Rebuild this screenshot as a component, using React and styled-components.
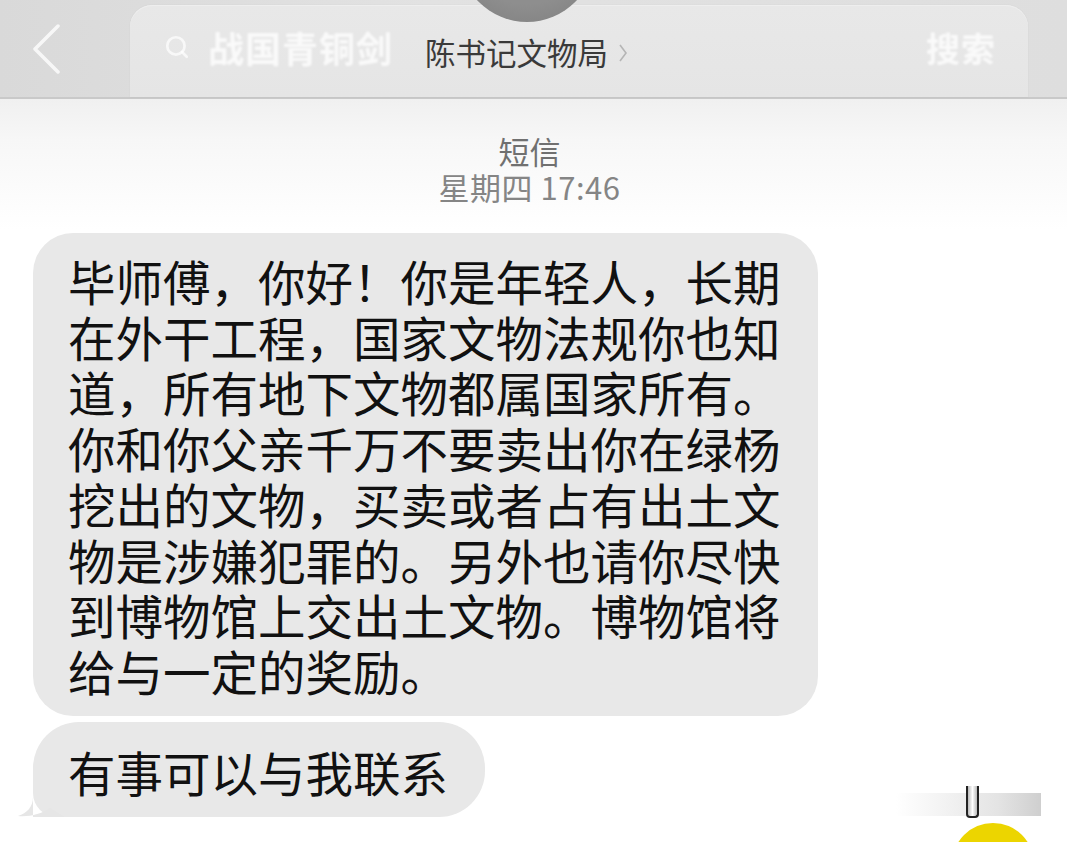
import styled, { createGlobalStyle } from "styled-components";
import { Search } from "lucide-react";

const GlobalStyle = createGlobalStyle`
  html, body {
    margin: 0;
    padding: 0;
    background: #ffffff;
  }
  body {
    font-family: "Noto Sans CJK SC", "Noto Sans", sans-serif;
    overflow: hidden;
  }
`;

const Screen = styled.div`
  position: relative;
  width: 1067px;
  height: 842px;
  overflow: hidden;
  background: linear-gradient(180deg, #f0f0f0 99px, #f7f7f7 140px, #ffffff 230px);
`;

const Header = styled.header`
  display: grid;
  grid-template-areas: "stack";
  height: 97px;
  background: linear-gradient(90deg, #d9d9d9 0%, #e2e2e2 40%, #dedede 100%);
  border-bottom: 2px solid #c9c9c9;
`;

const BarLayer = styled.div`
  grid-area: stack;
  display: flex;
  align-items: stretch;
`;

const BackButton = styled.div`
  width: 130px;
  display: flex;
  align-items: center;
  padding-left: 30px;
  box-sizing: border-box;
  filter: blur(0.4px);
`;

const GhostSearch = styled.div`
  width: 898px;
  margin-top: 5px;
  border-radius: 22px 22px 0 0;
  background: linear-gradient(180deg, #e8e8e8, #e5e5e5);
  box-shadow: inset 0 1px 0 #eeeeee, 0 0 2px rgba(0, 0, 0, 0.06);
  display: flex;
  align-items: center;
  padding: 0 32px 8px 34px;
  box-sizing: border-box;
  color: rgba(255, 255, 255, 0.78);
`;

const GhostText = styled.span`
  font-size: ${(p) => p.size}px;
  font-weight: 700;
  margin-left: ${(p) => p.gap || 0}px;
  letter-spacing: 1px;
  filter: blur(1.1px);
`;

const Spacer = styled.div`
  flex: 1;
`;

const TitleLayer = styled.div`
  grid-area: stack;
  position: relative;
  z-index: 1;
  display: flex;
  align-items: center;
  justify-content: center;
  padding: 8px 14px 0 0;
  gap: 10px;
`;

const Title = styled.span`
  font-size: 30.5px;
  color: #3a3a3a;
  line-height: 1;
`;

const Avatar = styled.div`
  position: absolute;
  left: 459px;
  top: -114px;
  width: 136px;
  height: 136px;
  border-radius: 50%;
  background: radial-gradient(circle at 50% 40%, #8e8e8e 60%, #7c7c7c 100%);
`;

const Stamp = styled.div`
  margin-top: 34px;
  display: flex;
  flex-direction: column;
  align-items: center;
  line-height: 36px;
  font-size: 31px;
  padding-right: 8px;
`;

const StampLine = styled.div`
  color: ${(p) => p.color};
  letter-spacing: ${(p) => p.spacing || 0}px;
`;

const Thread = styled.div`
  margin-top: 28px;
  padding-left: 33px;
  display: flex;
  flex-direction: column;
  align-items: flex-start;
  gap: 6px;
`;

const Bubble = styled.div`
  position: relative;
  background: #e8e8e8;
  border-radius: ${(p) => (p.tail ? "46px 46px 46px 24px" : "40px")};
  padding: ${(p) => (p.tail ? "22px 37px 18px 35px" : "20px 37px 17px 35px")};
  font-size: 47.5px;
  line-height: 55.7px;
  color: #111111;
  white-space: pre-line;
`;

const Tail = styled.svg`
  position: absolute;
  left: -16px;
  bottom: 0;
`;

const ScrollHint = styled.div`
  position: absolute;
  left: 896px;
  top: 793px;
  width: 145px;
  height: 23px;
  background: linear-gradient(90deg, rgba(255, 255, 255, 0) 0%, #f0f0f0 40%, #e4e4e4 70%, #cfcfcf 100%);
`;

const Handle = styled.div`
  position: absolute;
  left: 966px;
  top: 786px;
  width: 9px;
  height: 30px;
  border: 2px solid #222;
  border-top: none;
  border-radius: 0 0 4px 4px;
  background: linear-gradient(90deg, #bbb, #fff, #bbb);
`;

const FloatButton = styled.div`
  position: absolute;
  left: 952px;
  top: 823px;
  width: 82px;
  height: 82px;
  border-radius: 50%;
  background: #ecd500;
`;

const App = () => {
  return (
    <>
      <GlobalStyle />
      <Screen>
        <Header>
          <BarLayer>
            <BackButton>
              <svg width="32" height="52" viewBox="0 0 32 52">
                <path
                  d="M28 3 L5 26 L28 49"
                  fill="none"
                  stroke="#f7f7f7"
                  strokeWidth="3.5"
                  strokeLinecap="round"
                  strokeLinejoin="round"
                />
              </svg>
            </BackButton>
            <GhostSearch>
              <Search size={26} strokeWidth={2.5} color="rgba(255,255,255,0.7)" />
              <GhostText size={36} gap={18}>战国青铜剑</GhostText>
              <Spacer />
              <GhostText size={34}>搜索</GhostText>
            </GhostSearch>
          </BarLayer>
          <TitleLayer>
            <Title>陈书记文物局</Title>
            <svg width="10" height="20" viewBox="0 0 10 20">
              <path d="M2 2 L8 10 L2 18" fill="none" stroke="#b5b5b5" strokeWidth="1.6" />
            </svg>
          </TitleLayer>
        </Header>
        <Avatar />
        <Stamp>
          <StampLine color="#707070">短信</StampLine>
          <StampLine color="#858585" spacing={0.5}>星期四 17:46</StampLine>
        </Stamp>
        <Thread>
          <Bubble>
            {"毕师傅，你好！你是年轻人，长期\n在外干工程，国家文物法规你也知\n道，所有地下文物都属国家所有。\n你和你父亲千万不要卖出你在绿杨\n挖出的文物，买卖或者占有出土文\n物是涉嫌犯罪的。另外也请你尽快\n到博物馆上交出土文物。博物馆将\n给与一定的奖励。"}
          </Bubble>
          <Bubble tail>
            <Tail width="48" height="44" viewBox="0 0 48 44">
              <path
                d="M16 0 L16 24 C16 34 10 40 1 43 C13 44 24 41 33 35 L48 44 L16 44 Z"
                fill="#e6e6e6"
              />
            </Tail>
            有事可以与我联系
          </Bubble>
        </Thread>
        <ScrollHint />
        <Handle />
        <FloatButton />
      </Screen>
    </>
  );
};

export default App;
